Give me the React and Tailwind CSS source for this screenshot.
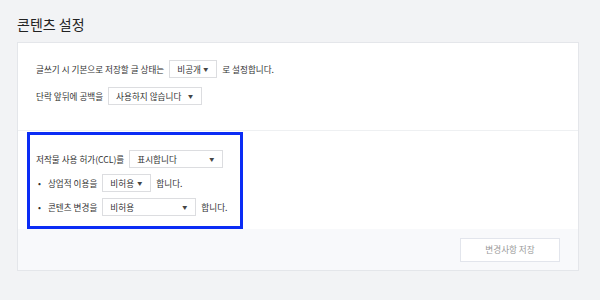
import React from 'react'

const font = { fontFamily: '"Noto Sans CJK KR", "Noto Sans", sans-serif' }

function Select({ label, width }) {
  return (
    <div className={`flex items-center justify-between h-[18px] pl-[7px] pr-[8px] border border-[#dcdde0] bg-white text-[#333] whitespace-nowrap ${width}`}>
      <span>{label}</span>
      <span className="text-[5px] text-[#444]">▼</span>
    </div>
  )
}

export default function App() {
  return (
    <div className="w-[600px] h-[300px] bg-[#f2f3f5] pl-[17px] pr-[21px] pt-[14px]" style={font}>
      <h1 className="text-[14px] leading-[20px] text-[#222] mb-[8px]">콘텐츠 설정</h1>
      <div className="bg-white border border-[#e4e6ea] text-[8.6px] text-[#333]">
        <div className="px-[18px] pt-[17px] pb-[25px] flex flex-col gap-[9px] border-b border-[#eef0f2]">
          <div className="flex items-center gap-[5px] whitespace-nowrap">
            <span>글쓰기 시 기본으로 저장할 글 상태는</span>
            <Select label="비공개" width="w-[48px]" />
            <span>로 설정합니다.</span>
          </div>
          <div className="flex items-center gap-[5px] whitespace-nowrap">
            <span>단락 앞뒤에 공백을</span>
            <Select label="사용하지 않습니다" width="w-[94px]" />
          </div>
        </div>
        <div className="pl-[9px] pt-[1px]">
          <div className="w-[216px] border-[3px] border-[#0b2cf5] pl-[6px] pt-[15px] pb-[10px] flex flex-col gap-[6px] whitespace-nowrap">
            <div className="flex items-center gap-[5px]">
              <span>저작물 사용 허가(CCL)를</span>
              <Select label="표시합니다" width="w-[94px]" />
            </div>
            <div className="flex items-center gap-[5px]">
              <span className="flex items-center"><span className="ml-[2px] mr-[7px]">•</span>상업적 이용을</span>
              <Select label="비허용" width="w-[49px]" />
              <span>합니다.</span>
            </div>
            <div className="flex items-center gap-[5px]">
              <span className="flex items-center"><span className="ml-[2px] mr-[7px]">•</span>콘텐츠 변경을</span>
              <Select label="비허용" width="w-[94px]" />
              <span>합니다.</span>
            </div>
          </div>
        </div>
        <div className="bg-[#f8f9fb] h-[41px] flex items-center justify-end pr-[18px]">
          <button className="w-[100px] h-[24px] bg-white border border-[#e2e5ec] text-[8.6px] text-[#9a9a9a]" style={font}>변경사항 저장</button>
        </div>
      </div>
    </div>
  )
}
